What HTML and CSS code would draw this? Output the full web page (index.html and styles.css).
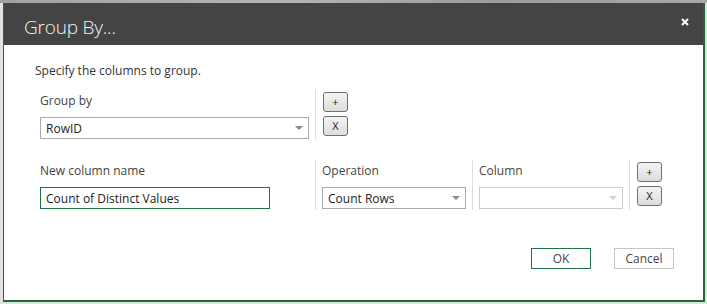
FILE: index.html
```html
<!DOCTYPE html>
<html lang="en">
<head>
    <meta charset="UTF-8">
    <title>Group By</title>
    <link rel="stylesheet" href="styles.css">
</head>
<body>
    <div class="topbar"></div>
    <div class="dialog">
        <div class="header">
            <h1>Group By...</h1>
            <svg class="close" width="8" height="8" viewBox="0 0 8 8">
                <path d="M1 1 L7 7 M7 1 L1 7" stroke="#fff" stroke-width="2"/>
            </svg>
        </div>
        <div class="content">
            <p class="intro">Specify the columns to group.</p>

            <div class="row">
                <div class="field wide">
                    <label>Group by</label>
                    <div class="select">
                        <span>RowID</span>
                        <span class="arrow"></span>
                    </div>
                </div>
                <div class="divider"></div>
                <div class="buttons">
                    <button class="small">+</button>
                    <button class="small">X</button>
                </div>
            </div>

            <div class="row">
                <div class="field wide">
                    <label>New column name</label>
                    <div class="textbox">Count of Distinct Values</div>
                </div>
                <div class="divider"></div>
                <div class="field narrow">
                    <label>Operation</label>
                    <div class="select">
                        <span>Count Rows</span>
                        <span class="arrow"></span>
                    </div>
                </div>
                <div class="divider"></div>
                <div class="field narrow">
                    <label>Column</label>
                    <div class="select disabled">
                        <span></span>
                        <span class="arrow"></span>
                    </div>
                </div>
                <div class="divider"></div>
                <div class="buttons">
                    <button class="small">+</button>
                    <button class="small">X</button>
                </div>
            </div>

            <div class="footer">
                <button class="action primary">OK</button>
                <button class="action">Cancel</button>
            </div>
        </div>
    </div>
</body>
</html>
```

FILE: styles.css
```css
* {
    box-sizing: border-box;
}

body {
    margin: 0;
    width: 707px;
    height: 304px;
    overflow: hidden;
    background: #e2e2e2;
    font-family: "Open Sans", "Noto Sans", sans-serif;
    font-size: 12px;
    color: #444444;
}

.topbar {
    height: 3px;
    background: linear-gradient(to right, #a2a2a2, #b4b4b4 40%, #9c9c9c 70%, #a8a8a8);
}

.dialog {
    margin-left: 3px;
    width: 702px;
    height: 299px;
    background: #ffffff;
    border: 1px solid #1e6b3c;
    border-top: 0;
    border-right-width: 2px;
    border-bottom-width: 2px;
    display: flex;
    flex-direction: column;
}

.header {
    height: 42px;
    background: #444444;
    display: flex;
    align-items: center;
    justify-content: space-between;
    padding: 0 14px 0 20px;
}

.header h1 {
    margin: 5px 0 0 0;
    font-size: 19px;
    font-weight: 300;
    color: #f4f4f4;
    letter-spacing: -0.2px;
}

.close {
    margin-bottom: 4px;
}

.content {
    padding: 18px 0 0 31px;
}

.intro {
    margin: 0 0 11px 0;
    line-height: 16px;
    color: #333333;
}

.row {
    display: flex;
    gap: 6px;
    height: 50px;
    margin-left: 5px;
    margin-bottom: 20px;
}

.field {
    display: flex;
    flex-direction: column;
    padding-top: 3px;
}

.field label {
    line-height: 16px;
    margin-bottom: 8px;
    color: #444444;
}

.wide {
    width: 269px;
}

.narrow {
    width: 144px;
}

.divider {
    width: 1px;
    background: #dddddd;
}

.buttons {
    display: flex;
    flex-direction: column;
    gap: 4px;
    padding-top: 2px;
    margin-left: 1px;
}

.small {
    width: 25px;
    height: 20px;
    padding: 0;
    border: 1px solid #707070;
    border-radius: 3px;
    background: linear-gradient(#f4f4f4, #dcdcdc);
    font-family: "Open Sans", "Noto Sans", sans-serif;
    font-size: 11px;
    line-height: 18px;
    color: #222222;
}

.select,
.textbox {
    height: 22px;
    border: 1px solid #aaaaaa;
    display: flex;
    align-items: center;
    justify-content: space-between;
    padding: 0 5px 0 5px;
    color: #222222;
}

.textbox {
    width: 230px;
    border-color: #217346;
}

.arrow {
    width: 0;
    height: 0;
    border-left: 4px solid transparent;
    border-right: 4px solid transparent;
    border-top: 4px solid #8a8a8a;
}

.select.disabled {
    border-color: #cccccc;
}

.select.disabled .arrow {
    border-top-color: #d0d0d0;
}

.footer {
    display: flex;
    justify-content: flex-end;
    gap: 23px;
    margin-top: 38px;
    padding-right: 29px;
}

.action {
    width: 60px;
    height: 21px;
    padding: 0;
    background: #ffffff;
    border: 1px solid #c6c6c6;
    font-family: "Open Sans", "Noto Sans", sans-serif;
    font-size: 12px;
    color: #444444;
}

.action.primary {
    border-color: #217346;
}
```
